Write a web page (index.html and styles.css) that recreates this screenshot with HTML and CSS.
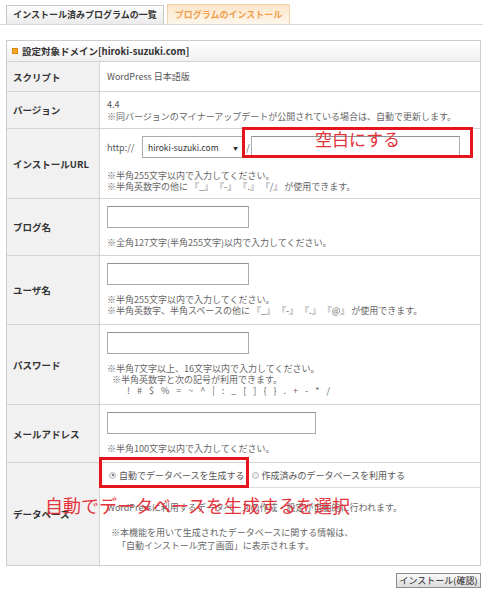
FILE: index.html
```html
<!DOCTYPE html>
<html lang="ja">
<head>
<meta charset="utf-8">
<title>プログラムのインストール</title>
<link rel="stylesheet" href="styles.css">
</head>
<body>
<div class="page">
  <div class="tabs">
    <div class="tab tab-list">インストール済みプログラムの一覧</div>
    <div class="tab tab-active">プログラムのインストール</div>
  </div>

  <div class="panel">
    <div class="panel-head"><span class="sq"></span>設定対象ドメイン[hiroki-suzuki.com]</div>

    <div class="row row-script">
      <div class="label">スクリプト</div>
      <div class="cell cell-mid"><p class="value">WordPress 日本語版</p></div>
    </div>

    <div class="row row-version">
      <div class="label">バージョン</div>
      <div class="cell cell-mid">
        <p class="value lh12">4.4</p>
        <p class="note lh12">※同バージョンのマイナーアップデートが公開されている場合は、自動で更新します。</p>
      </div>
    </div>

    <div class="row row-url">
      <div class="label">インストールURL</div>
      <div class="cell">
        <div class="url-line">
          <span class="url-prefix">http://</span>
          <span class="select"><span class="select-text">hiroki-suzuki.com</span><span class="select-arrow">▼</span></span>
          <span class="url-slash">/</span>
          <input class="field field-url" type="text">
        </div>
        <p class="note gap-url">※半角255文字以内で入力してください。<br>※半角英数字の他に 『_』 『-』 『.』 『/』 が使用できます。</p>
      </div>
    </div>

    <div class="row row-blog">
      <div class="label">ブログ名</div>
      <div class="cell">
        <input class="field" type="text">
        <p class="note gap">※全角127文字(半角255文字)以内で入力してください。</p>
      </div>
    </div>

    <div class="row row-user">
      <div class="label">ユーザ名</div>
      <div class="cell">
        <input class="field" type="text">
        <p class="note gap">※半角255文字以内で入力してください。<br>※半角英数字、半角スペースの他に 『_』 『-』 『.』 『@』 が使用できます。</p>
      </div>
    </div>

    <div class="row row-pass">
      <div class="label">パスワード</div>
      <div class="cell">
        <input class="field" type="password">
        <p class="note gap">※半角7文字以上、16文字以内で入力してください。<br><span class="ind1">※半角英数字と次の記号が利用できます。</span><span class="ind2 symbols">! # $ % = ~ ^ | : _ [ ] { } . + - * /</span></p>
      </div>
    </div>

    <div class="row row-mail">
      <div class="label">メールアドレス</div>
      <div class="cell">
        <input class="field field-mail" type="text">
        <p class="note gap">※半角100文字以内で入力してください。</p>
      </div>
    </div>

    <div class="row row-db">
      <div class="label">データベース</div>
      <div class="cell cell-db">
        <div class="radios">
          <span class="radio-opt"><span class="radio radio-on"></span>自動でデータベースを生成する</span>
          <span class="radio-opt"><span class="radio"></span>作成済みのデータベースを利用する</span>
        </div>
        <p class="note db-desc">WordPressに利用するデータベースの作成・設定が自動的に行われます。</p>
        <p class="note db-info">※本機能を用いて生成されたデータベースに関する情報は、<span class="db-info2">「自動インストール完了画面」に表示されます。</span></p>
      </div>
    </div>

    <div class="mark mark-url"><span class="mark-text">空白にする</span></div>
    <div class="mark mark-db"></div>
    <div class="callout">自動でデータベースを生成するを選択</div>
  </div>

  <div class="actions">
    <button class="btn" type="button">インストール(確認)</button>
  </div>
</div>
</body>
</html>
```

FILE: styles.css
```css
* {
  box-sizing: border-box;
  margin: 0;
  padding: 0;
}

body {
  margin: 0;
  background: #ffffff;
  font-family: "Noto Sans CJK JP", "Noto Sans", sans-serif;
  font-size: 9px;
  color: #555555;
}

.page {
  width: 487px;
}

/* tabs */
.tabs {
  display: flex;
  align-items: flex-end;
  gap: 3px;
  width: 483px;
  height: 25px;
  padding-left: 6px;
  border-bottom: 1px solid #d8d8d8;
}

.tab {
  height: 20px;
  border: 1px solid #c9c9c9;
  border-bottom: none;
  text-align: center;
  line-height: 19px;
  font-size: 9px;
  font-weight: bold;
  white-space: nowrap;
}

.tab-list {
  width: 158px;
  height: 19px;
  line-height: 18px;
  background: linear-gradient(#fdfdfd, #ebebeb);
  color: #333333;
}

.tab-active {
  width: 123px;
  background: linear-gradient(#fbe6c9, #fdf6ec);
  border-color: #efd4ae;
  color: #f0a04c;
}

/* panel */
.panel {
  position: relative;
  width: 475px;
  margin: 15px 0 0 6px;
  border: 1px solid #cccccc;
}

.panel-head {
  display: flex;
  align-items: center;
  gap: 4px;
  height: 20px;
  padding-left: 5px;
  background: linear-gradient(#ffffff, #f0f0f0);
  color: #333333;
  font-size: 9.5px;
  font-weight: bold;
}

.sq {
  width: 6px;
  height: 6px;
  background: #f7a627;
  border: 1px solid #d9880d;
}

.row {
  display: grid;
  grid-template-columns: 93px 1fr;
  border-top: 1px solid #d3d3d3;
}

.row-script { height: 30px; }
.row-version { height: 37px; }
.row-url { height: 70px; }
.row-blog { height: 57px; }
.row-user { height: 69px; }
.row-pass { height: 80px; }
.row-mail { height: 58px; }
.row-db { height: 103px; }

.label {
  display: flex;
  align-items: center;
  padding-left: 6px;
  background: #f1f1f1;
  border-right: 1px solid #d3d3d3;
  color: #333333;
  font-size: 9.5px;
  font-weight: bold;
  white-space: nowrap;
}

.cell {
  padding: 7px 0 0 7px;
  min-width: 0;
}

.cell-mid {
  display: flex;
  flex-direction: column;
  justify-content: center;
  padding-top: 0;
}

.value {
  color: #555555;
  line-height: 12px;
}

.lh12 {
  line-height: 12px;
}

.note {
  color: #666666;
  line-height: 11px;
  white-space: nowrap;
}

.gap {
  margin-top: 9px;
}

.gap-url {
  margin-top: 12px;
}

.ind1 {
  display: block;
  padding-left: 5px;
}

.ind2 {
  display: block;
  padding-left: 20px;
}

.symbols {
  word-spacing: 4px;
  letter-spacing: 0.5px;
}

/* form controls */
.field {
  display: block;
  width: 142px;
  height: 22px;
  border: 1px solid #a9abb0;
  border-top-color: #8f9196;
  background: #ffffff;
}

.field-mail {
  width: 209px;
}

.url-line {
  display: flex;
  align-items: center;
  height: 22px;
  color: #555555;
}

.url-prefix {
  width: 35px;
}

.select {
  display: flex;
  align-items: center;
  justify-content: space-between;
  width: 103px;
  height: 22px;
  padding: 0 6px 0 5px;
  border: 1px solid #a9abb0;
  background: #ffffff;
  color: #333333;
  font-size: 8.5px;
}

.select-arrow {
  font-size: 5px;
  color: #333333;
}

.url-slash {
  width: 6px;
  text-align: center;
}

.field-url {
  width: 209px;
}

/* database */
.cell-db {
  padding: 0;
}

.radios {
  display: flex;
  align-items: center;
  gap: 7px;
  height: 25px;
  padding-left: 9px;
  border-bottom: 1px solid #dddddd;
}

.radio-opt {
  display: flex;
  align-items: center;
  gap: 3px;
  color: #555555;
  white-space: nowrap;
}

.radio {
  position: relative;
  width: 7px;
  height: 7px;
  border-radius: 50%;
  border: 1px solid #b5b5b5;
  background: #eeeeee;
}

.radio-on::after {
  content: "";
  position: absolute;
  left: 1.5px;
  top: 1.5px;
  width: 2px;
  height: 2px;
  border-radius: 50%;
  background: #555555;
}

.db-desc {
  margin-top: 14px;
  padding-left: 7px;
}

.db-info {
  margin-top: 13px;
  padding-left: 11px;
  line-height: 13px;
}

.db-info2 {
  display: block;
  padding-left: 6px;
}

/* annotations */
.mark {
  position: absolute;
  border: 3px solid #e5141f;
}

.mark-url {
  left: 235px;
  top: 86px;
  width: 231px;
  height: 31px;
  text-align: center;
}

.mark-text {
  display: block;
  position: relative;
  top: -1px;
  color: #e3343c;
  font-size: 17px;
  line-height: 20px;
}

.mark-db {
  left: 92px;
  top: 416px;
  width: 150px;
  height: 31px;
}

.callout {
  position: absolute;
  left: 38px;
  top: 453px;
  color: #e3343c;
  font-size: 18px;
  line-height: 22px;
  white-space: nowrap;
}

/* button */
.actions {
  display: flex;
  justify-content: flex-end;
  width: 481px;
  margin-top: 7px;
}

.btn {
  width: 85px;
  height: 15px;
  border: 1px solid #8c8c8c;
  background: linear-gradient(#fafafa, #dcdcdc);
  color: #222222;
  font-family: "Noto Sans CJK JP", "Noto Sans", sans-serif;
  font-size: 9px;
  line-height: 13px;
}
```
